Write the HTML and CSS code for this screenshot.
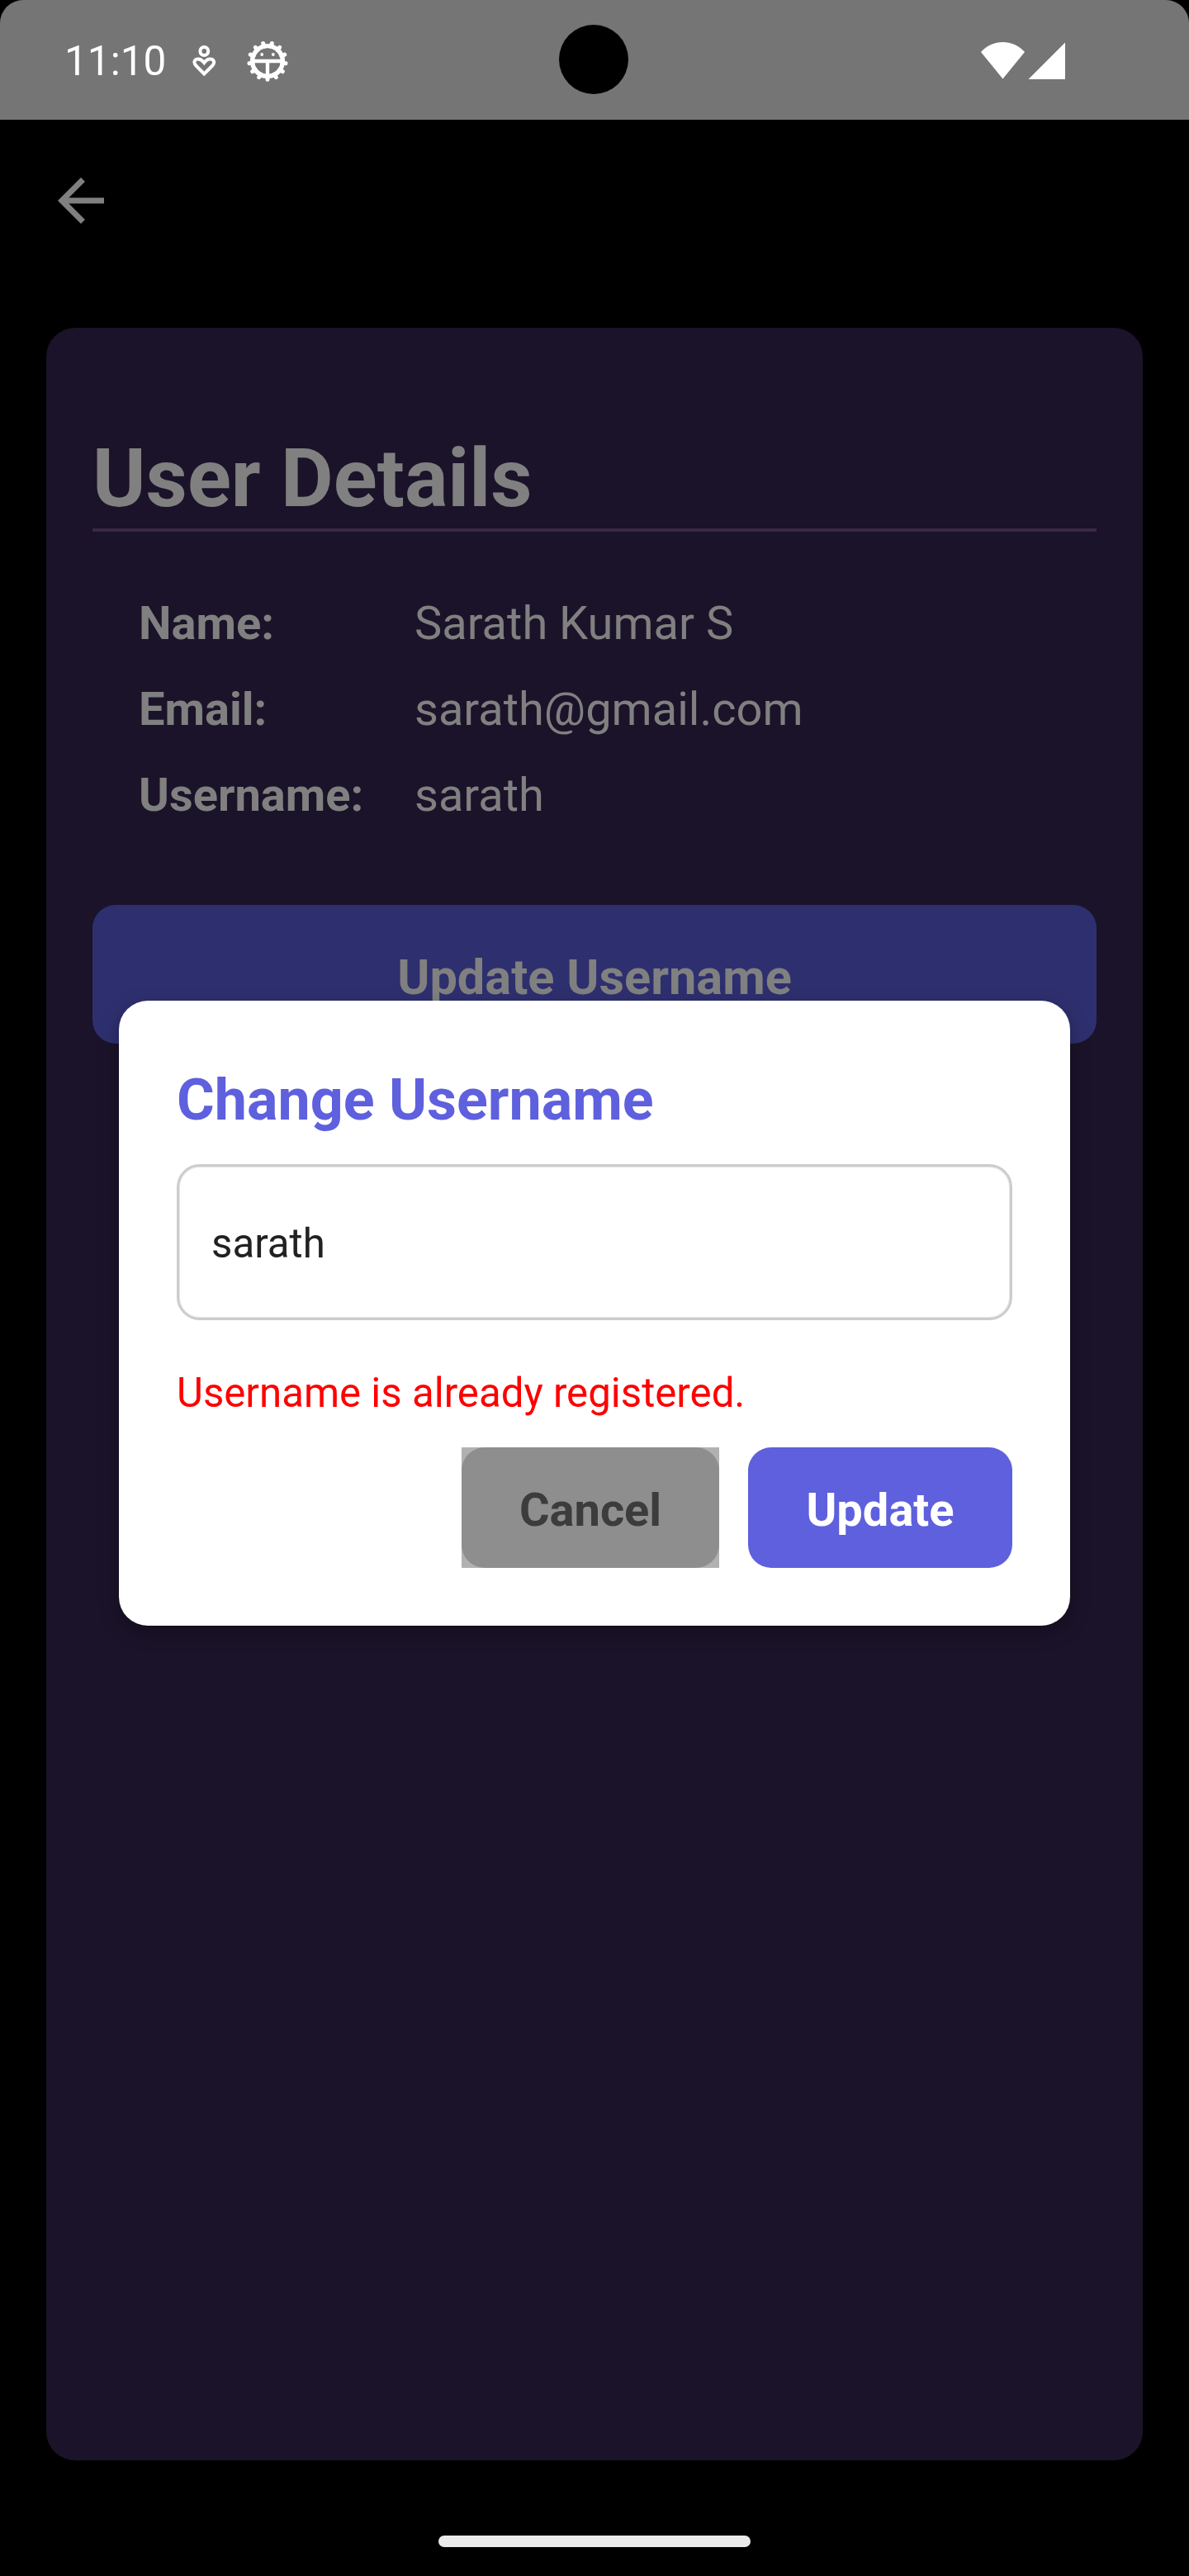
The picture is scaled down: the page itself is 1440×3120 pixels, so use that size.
FILE: index.html
```html
<!DOCTYPE html>
<html lang="en">
<head>
<meta charset="utf-8">
<title>User Details</title>
<link rel="stylesheet" href="styles.css">
</head>
<body>
<div class="screen">
  <header class="status">
    <span class="time">11:10</span>
    <svg class="person" width="30" height="40" viewBox="0 0 30 40" fill="none" stroke="#fff" stroke-width="4">
      <circle cx="15.300" cy="8" r="4.900"/>
      <path d="M15.300 35.500 5.300 25.500C1.500 21 4 17.500 8 17.500 11 17.500 13 19 15.300 22 17.500 19 19.500 17.500 22.500 17.500 26.500 17.500 29 21 25.300 25.500Z"/>
    </svg>
    <svg class="gear" width="50" height="50" viewBox="-25 -25 50 50" stroke="#fff" fill="none">
      <defs><path id="tooth" d="M0 18V22.200" stroke-width="5" stroke-linecap="round"/></defs>
      <circle r="18.400" stroke-width="5.400"/>
      <use href="#tooth"/>
      <use href="#tooth" transform="rotate(27.692)"/>
      <use href="#tooth" transform="rotate(55.385)"/>
      <use href="#tooth" transform="rotate(83.077)"/>
      <use href="#tooth" transform="rotate(110.769)"/>
      <use href="#tooth" transform="rotate(138.462)"/>
      <use href="#tooth" transform="rotate(166.154)"/>
      <use href="#tooth" transform="rotate(193.846)"/>
      <use href="#tooth" transform="rotate(221.538)"/>
      <use href="#tooth" transform="rotate(249.231)"/>
      <use href="#tooth" transform="rotate(276.923)"/>
      <use href="#tooth" transform="rotate(304.615)"/>
      <use href="#tooth" transform="rotate(332.308)"/>
      <path d="M-17 0H17M0 0V18" stroke-width="4.400"/>
      <circle cx="-6.800" cy="-8" r="1.900" fill="#fff" stroke="none"/>
      <circle cx="6.800" cy="-8" r="1.900" fill="#fff" stroke="none"/>
    </svg>
    <span class="camera"></span>
    <svg class="signal" width="102" height="46" viewBox="0 0 102 46" fill="#fff">
      <path d="M0 12C14-4 39-4 53 12L26.500 44.500Z"/>
      <path d="M102 .500V45H57.500Z"/>
    </svg>
  </header>
  <nav class="toolbar">
    <svg width="84" height="84" viewBox="0 0 24 24" fill="#808080"><path d="M20 11H7.830l5.590-5.590L12 4l-8 8 8 8 1.410-1.410L7.830 13H20v-2z"/></svg>
  </nav>
  <main class="card">
    <h1 class="heading">User Details</h1>
    <dl class="details">
      <dt>Name:</dt><dd>Sarath Kumar S</dd>
      <dt>Email:</dt><dd>sarath@gmail.com</dd>
      <dt>Username:</dt><dd>sarath</dd>
    </dl>
    <div class="open-dialog">Update Username</div>
  </main>
  <footer class="home"><span class="pill"></span></footer>
  <section class="dialog">
    <h2 class="dialog-title">Change Username</h2>
    <div class="field">sarath</div>
    <p class="error">Username is already registered.</p>
    <div class="actions">
      <div class="ripple"><div class="btn cancel">Cancel</div></div>
      <div class="btn update">Update</div>
    </div>
  </section>
</div>
</body>
</html>
```
FILE: styles.css
```css
* { box-sizing: border-box; margin: 0; padding: 0; }
body { background: #000; font-family: Roboto, "Liberation Sans", sans-serif; }
.screen { position: relative; width: 1440px; height: 3120px; background: #000; display: flex; flex-direction: column; overflow: hidden; }
.status { position: relative; height: 145px; flex: none; background: #757575; border-radius: 28px 28px 0 0; display: flex; align-items: center; padding: 2px 150px 0 78px; color: #fff; }
.time { font-size: 49.5px; line-height: 57px; width: 154px; padding-top: 2px; }
.gear { margin-left: 37px; }
.camera { position: absolute; left: 677px; top: 30px; width: 84px; height: 84px; border-radius: 50%; background: #000; }
.signal { margin-left: auto; }
.toolbar { height: 252px; flex: none; padding: 56px 56px 0; }
.toolbar svg { display: block; }
.card { height: 2583px; flex: none; margin: 0 56px; padding: 125px 56px 56px; border-radius: 35px; background: #1b1329; color: #808080; }
.heading { height: 122px; font-size: 98px; line-height: 115px; font-weight: 700; border-bottom: 4px solid #3a2844; }
.details { display: grid; grid-template-columns: 334px 1fr; row-gap: 38px; padding: 78px 56px 0; font-size: 56px; line-height: 66px; white-space: nowrap; }
.details dt { font-weight: 700; }
.open-dialog { margin-top: 100px; height: 168px; border-radius: 28px; background: #2e2f6e; font-size: 59.5px; font-weight: 700; display: flex; align-items: center; justify-content: center; padding-top: 8px; }
.home { flex: 1; padding-top: 91px; }
.pill { display: block; width: 378px; height: 14px; margin: 0 auto; border-radius: 7px; background: #ebebeb; }
.dialog { position: absolute; left: 144px; top: 1212px; width: 1152px; height: 757px; border-radius: 35px; background: #fff; padding: 79px 70px 70px; box-shadow: 0 8px 24px rgba(0, 0, 0, .25); }
.dialog-title { font-size: 70px; line-height: 82px; font-weight: 700; color: #5e60dd; }
.field { margin-top: 37px; height: 189px; border: 3px solid #ccc; box-shadow: inset 0 0 0 1px #e5e5e5; border-radius: 28px; padding: 3px 39px 0; font-size: 49.2px; color: #212121; display: flex; align-items: center; }
.error { margin-top: 60px; font-size: 49.2px; line-height: 57px; color: #f00; }
.actions { margin-top: 37px; display: flex; justify-content: flex-end; gap: 35px; }
.btn { height: 146px; border-radius: 28px; font-size: 56px; font-weight: 700; display: flex; align-items: center; justify-content: center; padding-top: 6px; }
.ripple { background: #b1b1b1; }
.cancel { width: 312px; background: #8e8e8e; color: #3c3c3c; }
.update { width: 320px; background: #5e60dd; color: #fff; }
```
